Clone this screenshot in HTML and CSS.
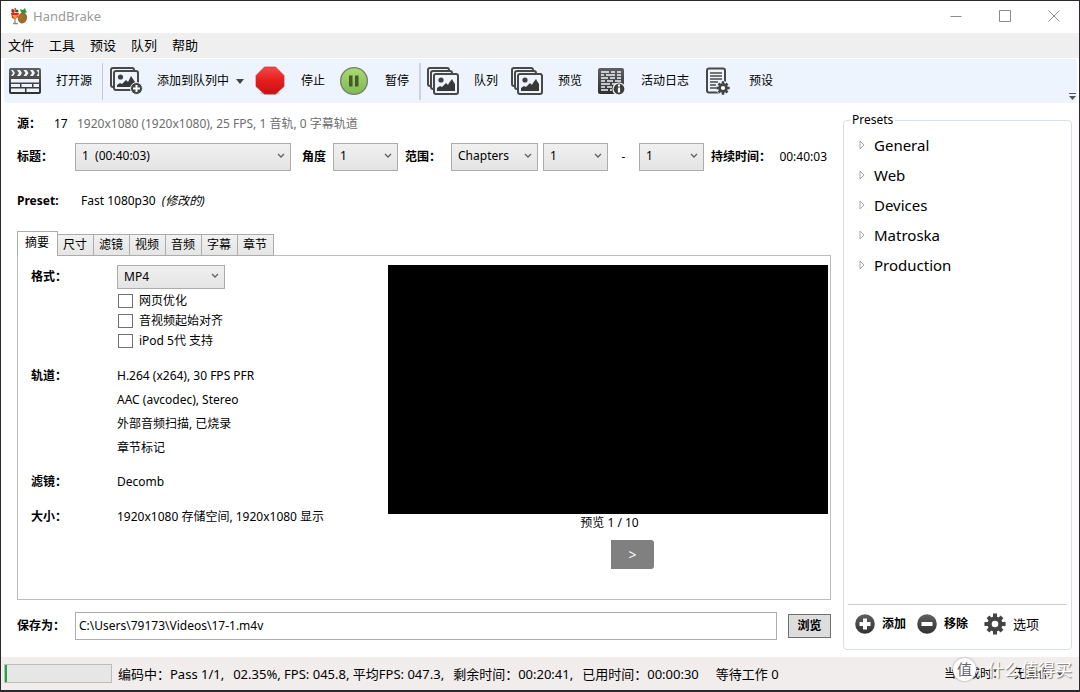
FILE: index.html
```html
<!DOCTYPE html>
<html lang="zh-CN">
<head>
<meta charset="utf-8">
<title>HandBrake</title>
<link rel="stylesheet" href="styles.css">
</head>
<body>
<svg class="defs" aria-hidden="true">
  <defs>
    <linearGradient id="ink" x1="0" y1="0" x2="0" y2="1"><stop offset="0" stop-color="#606060"/><stop offset="1" stop-color="#303030"/></linearGradient>
    <linearGradient id="red" x1="0" y1="0" x2="0" y2="1"><stop offset="0" stop-color="#f04a4a"/><stop offset="0.5" stop-color="#e81c1c"/><stop offset="1" stop-color="#c41414"/></linearGradient>
    <linearGradient id="green" x1="0" y1="0" x2="0" y2="1"><stop offset="0" stop-color="#a9db72"/><stop offset="1" stop-color="#80b850"/></linearGradient>
    <symbol id="stack" viewBox="0 0 34 30">
      <g fill="#eef4fd" stroke="#484848" stroke-width="2">
        <rect x="2" y="2" width="21" height="18" rx="2"/>
        <rect x="5" y="5" width="21" height="18" rx="2"/>
        <rect x="8" y="8" width="24" height="20" rx="2"/>
      </g>
      <circle cx="15" cy="14" r="2.6" fill="#404040"/>
      <path d="M11 25v-3l3-2 2 1 4-4 2 2 1-2 3-4 1 2 2 3v7z" fill="#383838"/>
    </symbol>
    <symbol id="chevron" viewBox="0 0 8 6"><path d="M1 1l3 3 3-3" fill="none" stroke="#606060" stroke-width="1.3"/></symbol>
    <symbol id="expander" viewBox="0 0 6 10"><path d="M1 1v8l4-4z" fill="#fff" stroke="#a6a6a6"/></symbol>
    <symbol id="gear" viewBox="-12 -12 24 24">
      <g stroke="#444" stroke-width="4.4">
        <path d="M0-11.500v23M-11.500 0h23"/>
        <path d="M-7.700-7.700l15.400 15.400M7.700-7.700l-15.400 15.400"/>
      </g>
      <circle r="8.200" fill="#444"/>
      <circle r="3.600" fill="#fff"/>
    </symbol>
  </defs>
</svg>
<div class="window">
  <header class="titlebar">
    <svg class="app-icon" viewBox="0 0 18 18">
      <path d="M2 2l2 5M5 1l1 4" stroke="#c05a28" stroke-width="1.5"/>
      <path d="M1 6h8l-1 4-3 2-3-1z" fill="#d92b20"/><path d="M2 8h6l-2 3H4z" fill="#f4a51e"/>
      <circle cx="3" cy="4" r="1.700" fill="#b31f35"/><circle cx="7" cy="4" r="1.500" fill="#2f6c22"/>
      <path d="M5 12v4M3 16.500h5" stroke="#8b9099" stroke-width="1.300"/>
      <ellipse cx="12.500" cy="11" rx="4.500" ry="5.500" fill="#9b6b2b" transform="rotate(18 12.500 11)"/>
      <path d="M10 10l4 4M13 8l-3 5" stroke="#b07f3a" stroke-width=".6"/>
      <path d="M11 5l-1-3 3 1 2-2 1 3 1 1-4 2z" fill="#2d9434"/>
    </svg>
    <h1 class="app-name">HandBrake</h1>
    <div class="window-buttons">
      <button aria-label="最小化"><svg viewBox="0 0 12 12"><path d="M.5 6.500h11"/></svg></button>
      <button aria-label="最大化"><svg viewBox="0 0 12 12"><path d="M.5.5h11v11H.5z"/></svg></button>
      <button aria-label="关闭"><svg viewBox="0 0 12 12"><path d="M.5.5l11 11M11.500.5l-11 11"/></svg></button>
    </div>
  </header>
  <nav class="menubar">
    <button>文件</button><button>工具</button><button>预设</button><button>队列</button><button>帮助</button>
  </nav>
  <div class="toolbar">
    <button class="tool open">
      <svg class="icon-wide" viewBox="0 0 34 28">
        <rect x="1" y="1" width="32" height="26" rx="2" fill="url(#ink)"/>
        <path d="M3 3h2l2 3-2 3H3l2-3zM9 3h3l2 3-2 3H9l2-3zM15.500 3h3l2 3-2 3h-3l2-3zM22 3h3l2 3-2 3h-3l2-3zM28.500 3H31v6h-2.500l2-3z" fill="#eef4fd"/>
        <path d="M3 12h28v3.500H3zM3 17h9v3H3zM13.500 17H24v3H13.500zM25.500 17H31v3h-5.500zM3 21.500h14V25H3zM18.500 21.500H31V25H18.500z" fill="#eef4fd"/>
      </svg><span>打开源</span></button>
    <button class="tool add">
      <svg class="icon-wide" viewBox="0 0 34 28">
        <g fill="#eef4fd" stroke="#484848" stroke-width="2"><rect x="2" y="1" width="23" height="19" rx="2"/><rect x="5" y="4" width="24" height="19" rx="2"/></g>
        <circle cx="11.500" cy="10" r="2.600" fill="#404040"/>
        <path d="M8 20v-2l3-2 2 1 4-4 2 2 3-6 4 6v5z" fill="#383838"/>
        <circle cx="27.500" cy="21.500" r="6" fill="#444" stroke="#eef4fd"/><path d="M27.500 18v7M24 21.500h7" stroke="#fff" stroke-width="2"/>
      </svg><span>添加到队列中</span><svg class="caret" viewBox="0 0 8 5"><path d="M0 0h8L4 5z"/></svg></button>
    <button class="tool stop">
      <svg class="icon-round" viewBox="0 0 30 30"><ellipse cx="15" cy="27" rx="10" ry="2" fill="#c9c9cc"/><path d="M9.500 1h11L29 9.500v11L20.500 28h-11L1 20.500v-11z" fill="url(#red)" stroke="#c33030" stroke-width=".7"/></svg><span>停止</span></button>
    <button class="tool pause">
      <svg class="icon-round" viewBox="0 0 30 30"><circle cx="15" cy="15" r="13.400" fill="url(#green)" stroke="#777e72" stroke-width="1.300"/><path d="M10 9.500h3.500v11H10zM16 9.500h3.500v11H16z" fill="#45592f"/></svg><span>暂停</span></button>
    <button class="tool queue"><svg class="icon-stack"><use href="#stack"/></svg><span>队列</span></button>
    <button class="tool preview"><svg class="icon-stack"><use href="#stack"/></svg><span>预览</span></button>
    <button class="tool log">
      <svg class="icon-log" viewBox="0 0 28 28">
        <rect x="1" y="1" width="26" height="26" rx="2" fill="url(#ink)"/>
        <path d="M4 5h8m2 0h4m2 0h4M4 8h3m2 0h9m2 0h4M4 11h7m2 0h5m2 0h4M4 14h4m2 0h6m2 0h6M4 17h9m2 0h4M4 20h4m2 0h5M4 23h7m2 0h2" stroke="#eef4fd" stroke-width="1.300"/>
        <circle cx="22" cy="22" r="6" fill="#3c3c3c" stroke="#eef4fd" stroke-width="1.200"/><path d="M22 20.500v5M22 17.500v2" stroke="#fff" stroke-width="2.200"/>
      </svg><span>活动日志</span></button>
    <button class="tool presets-tool">
      <svg class="icon-doc" viewBox="0 0 26 28">
        <rect x="2" y="1.500" width="18" height="24" rx="2" fill="#eef4fd" stroke="#484848" stroke-width="2"/>
        <path d="M5 6h12M5 9h12M5 12h12M5 15h8M5 18h6M5 21h6" stroke="#484848" stroke-width="1.300"/>
        <circle cx="18" cy="21" r="7" fill="#eef4fd"/><use href="#gear" x="11" y="14" width="14" height="14"/>
      </svg><span>预设</span></button>
    <svg class="overflow" viewBox="0 0 7 7"><path d="M0 0h7v1H0zM0 3h7L3.500 7z"/></svg>
  </div>

  <div class="workspace">
    <main class="editor">
      <div class="source"><b>源：</b><span class="source-name">17</span><span class="source-info">1920x1080 (1920x1080), 25 FPS, 1 音轨, 0 字幕轨道</span></div>
      <div class="title-row">
        <label class="row-label" for="title">标题：</label>
        <span class="select title-select"><select id="title"><option>1&nbsp; (00:40:03)</option></select><svg><use href="#chevron"/></svg></span>
        <label class="angle-label" for="angle">角度</label>
        <span class="select number"><select id="angle"><option>1</option></select><svg><use href="#chevron"/></svg></span>
        <label class="range-label" for="range">范围：</label>
        <span class="select range"><select id="range"><option>Chapters</option></select><svg><use href="#chevron"/></svg></span>
        <span class="select number start"><select aria-label="起始章节"><option>1</option></select><svg><use href="#chevron"/></svg></span>
        <span class="dash">-</span>
        <span class="select number"><select aria-label="结束章节"><option>1</option></select><svg><use href="#chevron"/></svg></span>
        <b class="duration-label">持续时间：</b><span class="duration">00:40:03</span>
      </div>
      <div class="preset-row"><b>Preset:</b><span>Fast 1080p30</span><i>(修改的)</i></div>

      <div class="tabs" role="tablist">
        <button role="tab" aria-selected="true" class="tab active">摘要</button><button role="tab" class="tab">尺寸</button><button role="tab" class="tab">滤镜</button><button role="tab" class="tab">视频</button><button role="tab" class="tab">音频</button><button role="tab" class="tab">字幕</button><button role="tab" class="tab">章节</button>
      </div>
      <section class="panel">
        <div class="summary">
          <label class="term" for="format">格式：</label>
          <div class="format">
            <span class="select small"><select id="format"><option>MP4</option></select><svg><use href="#chevron"/></svg></span>
            <label class="check"><input type="checkbox">网页优化</label>
            <label class="check"><input type="checkbox">音视频起始对齐</label>
            <label class="check"><input type="checkbox">iPod 5代 支持</label>
          </div>
          <b class="term">轨道：</b>
          <div class="lines"><span>H.264 (x264), 30 FPS PFR</span><span>AAC (avcodec), Stereo</span><span>外部音频扫描, 已烧录</span><span>章节标记</span></div>
          <b class="term">滤镜：</b><span>Decomb</span>
          <b class="term">大小：</b><span>1920x1080 存储空间, 1920x1080 显示</span>
        </div>
        <div class="preview-pane">
          <div class="screen"></div>
          <span class="counter">预览 1 / 10</span>
          <button class="next">&gt;</button>
        </div>
      </section>
      <div class="save-row">
        <label class="row-label" for="path">保存为：</label>
        <input id="path" type="text" value="C:\Users\79173\Videos\17-1.m4v">
        <button class="browse">浏览</button>
      </div>
    </main>

    <fieldset class="presets">
      <legend>Presets</legend>
      <ul class="tree">
        <li><svg><use href="#expander"/></svg>General</li>
        <li><svg><use href="#expander"/></svg>Web</li>
        <li><svg><use href="#expander"/></svg>Devices</li>
        <li><svg><use href="#expander"/></svg>Matroska</li>
        <li><svg><use href="#expander"/></svg>Production</li>
      </ul>
      <div class="preset-actions">
        <button><svg viewBox="0 0 20 20"><circle cx="10" cy="10" r="9.800" fill="url(#ink)"/><path d="M10 4.500v11M4.500 10h11" stroke="#fff" stroke-width="4"/></svg>添加</button>
        <button><svg viewBox="0 0 20 20"><circle cx="10" cy="10" r="9.800" fill="url(#ink)"/><path d="M4.500 10h11" stroke="#fff" stroke-width="4"/></svg>移除</button>
        <button class="options"><svg><use href="#gear"/></svg>选项</button>
      </div>
    </fieldset>
  </div>

  <footer class="status">
    <div class="progress" role="progressbar" aria-valuenow="2.35"><div class="progress-fill" style="width:2.35%"></div></div>
    <span class="encode"><span>编码中：Pass 1/1,</span><span>02.35%, FPS: 045.8, 平均FPS: 047.3,</span><span>剩余时间：00:20:41,</span><span>已用时间：00:00:30</span></span>
    <span class="pending">等待工作 0</span>
    <div class="when-done"><span>当完成时：</span><button>无操作<svg class="caret" viewBox="0 0 8 5"><path d="M0 0h8L4 5z"/></svg></button>
      <div class="watermark"><span class="seal">值</span><span>什么值得买</span></div>
    </div>
  </footer>
</div>
</body>
</html>
```

FILE: styles.css
```css
* { box-sizing: border-box; }

body {
  margin: 0;
  color: #000;
  background: #fff;
  font: 12px/16px "Noto Sans", "Noto Sans CJK SC", sans-serif;
}

button, input, select { font: inherit; color: inherit; }
button { padding: 0; border: 0; background: none; }
.defs { position: absolute; width: 0; height: 0; }

.window {
  display: flex;
  flex-direction: column;
  min-height: 100vh;
  border: 1px solid #2b292b;
  border-bottom-width: 2px;
}

/* Title and menu bars */
.titlebar { display: flex; align-items: center; height: 32px; padding: 0 0 2px 9px; }
.app-icon { width: 18px; height: 18px; }
.app-name { margin: 0 0 0 5px; color: #999; font-size: 13px; font-weight: 400; }
.window-buttons { display: flex; margin-left: auto; padding-right: 1px; }
.window-buttons button { display: grid; place-items: center; width: 49px; height: 30px; }
.window-buttons svg { width: 12px; height: 12px; fill: none; stroke: #8c8c8c; }

.menubar { display: flex; gap: 15px; height: 25px; padding: 0 0 2px 7px; background: #efefef; font-size: 13px; }

.toolbar {
  position: relative;
  display: flex;
  align-items: center;
  height: 44px;
  margin: 1px 2px 0 3px;
  background: #edf4fd;
  border-radius: 3px;
}
.tool { display: flex; align-items: center; height: 37px; padding-left: 4px; white-space: nowrap; }
.tool svg { flex: none; }
.icon-wide { width: 34px; height: 28px; }
.icon-round { width: 30px; height: 30px; }
.icon-stack { width: 34px; height: 30px; }
.icon-log { width: 28px; height: 28px; }
.icon-doc { width: 26px; height: 28px; }
.tool span { margin-left: 14px; }
.tool .caret { margin-left: 7px; }
.caret { width: 8px; height: 5px; fill: #444; }
.add { margin-left: 10px; padding-left: 6px; border-left: 1px solid #c5cad2; }
.stop { margin-left: 7px; }
.stop span, .pause span { margin-left: 16px; }
.pause { margin-left: 10px; }
.queue { margin-left: 10px; padding-left: 5px; border-left: 2px solid #cdd2da; }
.preview { margin-left: 8px; }
.log { margin-left: 11px; }
.log span { margin-left: 16px; }
.presets-tool { margin-left: 12px; }
.presets-tool span { margin-left: 18px; }
.overflow { width: 7px; height: 7px; margin: auto 1px 3px auto; fill: #555; }

/* Workspace */
.workspace { display: grid; grid-template-columns: minmax(0, 1fr) 229px; gap: 12px; flex: 1; padding: 9px 7px 7px 16px; }
.editor { display: flex; flex-direction: column; }
.source { display: flex; padding-top: 4px; }
.source b { width: 37px; }
.source-name { width: 23px; }
.source-info { color: #6d6d6d; }
.title-row { display: flex; align-items: center; margin-top: 11px; white-space: nowrap; }
.title-row label, .save-row label, .term { font-weight: 700; }
.row-label { width: 58px; }

.select { position: relative; height: 28px; }
.select select {
  width: 100%;
  height: 100%;
  padding: 0 20px 3px 6px;
  border: 1px solid #acacac;
  border-radius: 0;
  background: linear-gradient(#f0f0f0, #e4e4e4);
  appearance: none;
}
.select svg { position: absolute; top: 10px; right: 6px; width: 8px; height: 6px; pointer-events: none; }
.title-select { flex: 0 1 216px; }
.number { width: 65px; }
.range { width: 87px; }
.angle-label { margin: 0 7px 0 11px; }
.range-label { margin: 0 10px 0 7px; }
.start { margin-left: 5px; }
.dash { width: 31px; text-align: center; }
.duration-label { margin-left: 7px; }
.duration { margin-left: auto; padding-right: 4px; }

.preset-row { display: flex; margin-top: 22px; }
.preset-row b { width: 64px; }
.preset-row i { margin-left: 6px; }

.tabs { display: flex; align-items: flex-end; margin: 22px 0 -1px; z-index: 1; }
.tab {
  height: 22px;
  padding: 0 6px 1px 5px;
  border: 1px solid #acacac;
  border-left: 0;
  background: linear-gradient(#f1f1f1, #e5e5e5);
}
.tab.active { height: 25px; padding: 0 8px 2px 7px; border-left: 1px solid #acacac; border-bottom: 0; background: #fff; }

.panel { display: grid; grid-template-columns: 357px minmax(0, 1fr); flex: 1; padding: 9px 2px 30px 13px; border: 1px solid #bdbdbd; }
.summary { display: grid; grid-template-columns: 86px 1fr; align-content: start; row-gap: 19px; }
.summary > .term:first-child { padding-top: 4px; }
.format { display: flex; flex-direction: column; align-items: flex-start; gap: 4px; }
.small { width: 108px; height: 24px; }
.small select { padding-bottom: 0; }
.small svg { top: 8px; }
.check { display: flex; align-items: center; gap: 6px; height: 16px; margin-left: 1px; }
.check input { width: 15px; height: 14px; margin: 0; border: 1px solid #707070; background: #fff; appearance: none; }
.lines { display: grid; row-gap: 8px; margin-bottom: -1px; }
.preview-pane { display: flex; flex-direction: column; align-items: center; }
.screen { width: 100%; flex: 1; background: #000; }
.counter { margin-top: 1px; padding-left: 3px; }
.next { width: 43px; height: 29px; margin: 9px 0 0 49px; border-radius: 0 3px 3px 0; background: #808080; color: #fff; font-size: 14px; }

.save-row { display: flex; align-items: center; margin: 12px 0 10px; }
.save-row input { flex: 1; min-width: 0; height: 28px; padding: 0 3px 1px; border: 1px solid #abadb3; }
.browse { width: 43px; height: 24px; margin-left: 11px; border: 1px solid #707070; background: #ddd; font-weight: 700; }

/* Preset list */
.presets { display: flex; flex-direction: column; min-width: 0; margin: 0; padding: 0 4px 7px; border: 1px solid #d5dfe5; border-radius: 4px; }
.presets legend { margin-left: 2px; padding: 0 2px; }
.tree { flex: 1; margin: 0; padding: 2px 0 0; list-style: none; font-size: 15px; }
.tree li { display: flex; align-items: center; height: 30px; gap: 9px; padding-left: 11px; }
.tree svg { width: 6px; height: 10px; }
.preset-actions { display: flex; align-items: center; height: 38px; padding-left: 7px; border-top: 1px solid #ccc; gap: 11px; font-weight: 700; }
.preset-actions button { display: flex; align-items: center; gap: 7px; white-space: nowrap; }
.preset-actions svg { width: 20px; height: 20px; }
.preset-actions .options { margin-left: 5px; font-size: 13px; font-weight: 400; }
.preset-actions .options svg { width: 22px; height: 22px; }

/* Status bar */
.status { display: flex; align-items: center; height: 33px; padding-left: 3px; background: #f0edec; font-size: 13px; white-space: nowrap; }
.progress { width: 108px; height: 19px; margin-right: 6px; border: 1px solid #bcbcbc; background: #e6e6e6; }
.progress-fill { height: 100%; background: #1ba73a; }
.encode { display: flex; gap: 9px; }
.pending { margin-left: 17px; }
.when-done { position: relative; display: flex; gap: 10px; margin-left: auto; padding-right: 16px; font-size: 12px; }
.when-done button { display: flex; align-items: center; gap: 7px; }
.when-done .caret { width: 6px; height: 4px; }
.watermark {
  position: absolute;
  right: 7px;
  bottom: 0;
  display: flex;
  align-items: center;
  gap: 11px;
  color: #fff;
  font-size: 17px;
  line-height: 24px;
  text-shadow: 1px 1px 1px #777;
  pointer-events: none;
}
.seal { width: 23px; height: 23px; border-radius: 50%; background: #fff; box-shadow: 0 0 2px #888; color: #666; font-size: 15px; line-height: 22px; text-align: center; text-shadow: none; }
```
